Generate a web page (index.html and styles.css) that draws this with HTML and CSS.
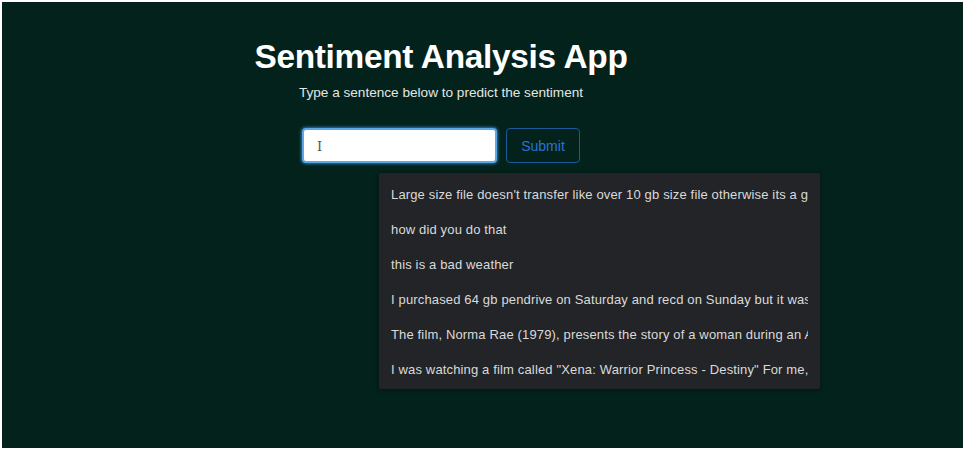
FILE: index.html
```html
<!DOCTYPE html>
<html>
<head>
<meta charset="utf-8">
<link rel="stylesheet" href="styles.css">
</head>
<body>
<main class="app">
  <h1 class="title">Sentiment Analysis App</h1>
  <p class="subtitle">Type a sentence below to predict the sentiment</p>
  <form class="form">
    <div class="field">
      <input class="input" type="text">
      <span class="cursor">I</span>
    </div>
    <button class="submit" type="button">Submit</button>
    <ul class="suggestions">
      <li>Large size file doesn't transfer like over 10 gb size file otherwise its a good product</li>
      <li>how did you do that</li>
      <li>this is a bad weather</li>
      <li>I purchased 64 gb pendrive on Saturday and recd on Sunday but it was not working</li>
      <li>The film, Norma Rae (1979), presents the story of a woman during an American union drive</li>
      <li>I was watching a film called "Xena: Warrior Princess - Destiny" For me, it was great</li>
    </ul>
  </form>
</main>
</body>
</html>
```
FILE: styles.css
```css
html {
  background: #ffffff;
  margin: 0;
  padding: 0;
}
body {
  margin: 2px;
  height: 446px;
  background: #03221c;
  font-family: "Liberation Sans", Arial, sans-serif;
  overflow: hidden;
}
.app {
  width: 400px;
  margin-left: 239px;
  padding-top: 35px;
  display: flex;
  flex-direction: column;
  align-items: center;
}
.title {
  margin: 0;
  color: #ffffff;
  font-size: 33.4px;
  font-weight: bold;
  line-height: 40px;
  letter-spacing: -0.3px;
}
.subtitle {
  margin: 8px 0 0;
  color: #e4e6e4;
  font-size: 13.6px;
  line-height: 16px;
}
.form {
  position: relative;
  margin-top: 27px;
  display: flex;
  gap: 9px;
}
.field {
  position: relative;
}
.input {
  box-sizing: border-box;
  width: 195px;
  height: 35px;
  border: 2px solid #5aa9e6;
  border-radius: 4px;
  background: #ffffff;
  box-shadow: 0 0 3px 1px rgba(70, 150, 230, 0.7);
  outline: none;
  padding: 0 10px;
}
.cursor {
  position: absolute;
  left: 15px;
  top: 11px;
  font-size: 13px;
  color: #555;
  font-family: "DejaVu Serif", serif;
}
.submit {
  box-sizing: border-box;
  width: 74px;
  height: 35px;
  border: 1px solid #1b5a9a;
  border-radius: 4px;
  background: #03221c;
  color: #2a74d0;
  font-family: "Liberation Sans", Arial, sans-serif;
  font-size: 14px;
  padding: 0;
}
.suggestions {
  position: absolute;
  left: 77px;
  top: 45px;
  width: 441px;
  box-sizing: border-box;
  margin: 0;
  padding: 4px 0 2px;
  list-style: none;
  background: #232427;
  box-shadow: 0 1px 4px rgba(0, 0, 0, 0.4);
  border-radius: 2px;
}
.suggestions li {
  height: 35px;
  line-height: 35px;
  margin: 0 12px;
  color: #d9dadb;
  font-size: 13px;
  letter-spacing: 0.15px;
  white-space: nowrap;
  overflow: hidden;
}
```
